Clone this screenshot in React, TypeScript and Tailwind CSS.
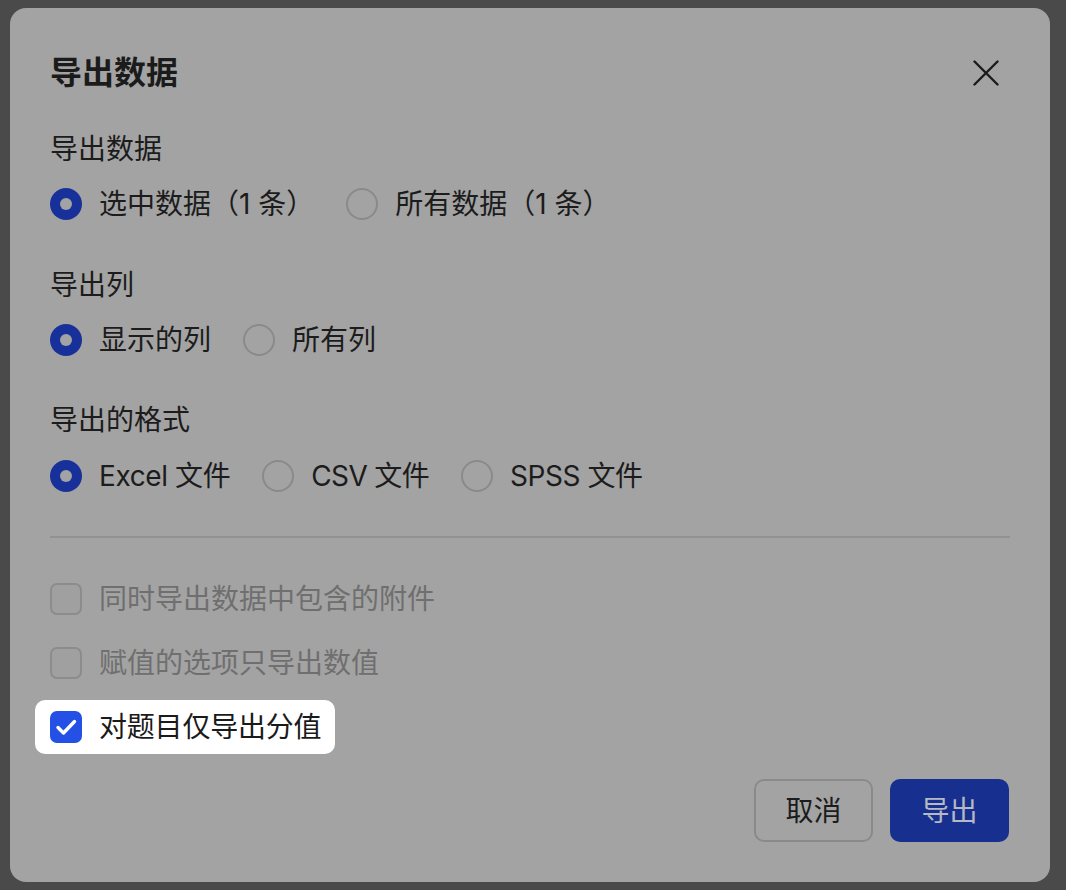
import { useState } from "react";

type Option = { id: string; label: string; tracking?: string };

const dataOptions: Option[] = [
  { id: "selected", label: "选中数据（1 条）" },
  { id: "all", label: "所有数据（1 条）" },
];

const columnOptions: Option[] = [
  { id: "visible", label: "显示的列" },
  { id: "all", label: "所有列" },
];

const formatOptions: Option[] = [
  { id: "excel", label: "Excel 文件", tracking: "tracking-[-0.4px]" },
  { id: "csv", label: "CSV 文件", tracking: "tracking-[-0.65px]" },
  { id: "spss", label: "SPSS 文件", tracking: "tracking-[-0.45px]" },
];

function Radio({ checked }: { checked: boolean }) {
  return checked ? (
    <span className="w-[32px] h-[32px] rounded-full bg-[#18319a] flex items-center justify-center flex-shrink-0">
      <span className="w-[12px] h-[12px] rounded-full bg-[#a3a3a3]" />
    </span>
  ) : (
    <span className="w-[32px] h-[32px] rounded-full border-2 border-[#8a8a8a] flex-shrink-0" />
  );
}

function RadioGroup({
  options,
  value,
  onChange,
}: {
  options: Option[];
  value: string;
  onChange: (v: string) => void;
}) {
  return (
    <div className="h-[40px] flex items-center gap-[32px]">
      {options.map((o) => (
        <button key={o.id} onClick={() => onChange(o.id)} className="flex items-center gap-[17px] text-[28px] leading-[40px] text-[#1c1c1c]">
          <Radio checked={value === o.id} />
          <span className={o.tracking}>{o.label}</span>
        </button>
      ))}
    </div>
  );
}

export default function App() {
  const [data, setData] = useState("selected");
  const [cols, setCols] = useState("visible");
  const [format, setFormat] = useState("excel");
  const [scoreOnly, setScoreOnly] = useState(true);

  return (
    <main className="min-h-[890px] w-full bg-[#4a4a4a] pt-[8px] pl-[10px] [font-family:Inter,'Noto_Sans_CJK_SC',sans-serif]">
      <div className="w-[1040px] h-[874px] rounded-[16px] bg-[#a3a3a3] px-[40px] pt-[45px] flex flex-col">
        {/* Header */}
        <div className="h-[40px] flex items-center justify-between">
          <h2 className="text-[32px] leading-[40px] font-bold text-[#1b1b1b]">导出数据</h2>
          <button className="mr-[11px] mt-[-1px]">
            <svg width="26" height="26" viewBox="0 0 26 26" fill="none" stroke="#1b1b1b" strokeWidth={2.4} strokeLinecap="round">
              <path d="M1.5 1.5L24.5 24.5M24.5 1.5L1.5 24.5" />
            </svg>
          </button>
        </div>

        <p className="mt-[36px] text-[28px] leading-[40px] text-[#1c1c1c]">导出数据</p>
        <div className="mt-[15px]">
          <RadioGroup options={dataOptions} value={data} onChange={setData} />
        </div>

        <p className="mt-[41px] text-[28px] leading-[40px] text-[#1c1c1c]">导出列</p>
        <div className="mt-[15px]">
          <RadioGroup options={columnOptions} value={cols} onChange={setCols} />
        </div>

        <p className="mt-[40px] text-[28px] leading-[40px] text-[#1c1c1c]">导出的格式</p>
        <div className="mt-[16px]">
          <RadioGroup options={formatOptions} value={format} onChange={setFormat} />
        </div>

        <div className="mt-[40px] h-[2px] bg-[#929292]" />

        {/* Checkboxes */}
        <div className="mt-[34px] flex flex-col items-start gap-[10px]">
          <div className="h-[54px] -ml-[15px] pl-[15px] pr-[14px] flex items-center gap-[17px] text-[28px] leading-[40px] text-[#6f6f6f]">
            <span className="w-[32px] h-[32px] rounded-[7px] border-2 border-[#8c8c8c] bg-[#a0a0a0]" />
            同时导出数据中包含的附件
          </div>
          <div className="h-[54px] -ml-[15px] pl-[15px] pr-[14px] flex items-center gap-[17px] text-[28px] leading-[40px] text-[#6f6f6f]">
            <span className="w-[32px] h-[32px] rounded-[7px] border-2 border-[#8c8c8c] bg-[#a0a0a0]" />
            赋值的选项只导出数值
          </div>
          <button
            onClick={() => setScoreOnly(!scoreOnly)}
            className="h-[54px] -ml-[15px] pl-[15px] pr-[14px] flex items-center gap-[17px] rounded-[10px] bg-white text-[28px] leading-[40px] text-[#1a1a1a] tracking-[-0.2px]"
          >
            {scoreOnly ? (
              <span className="w-[32px] h-[32px] rounded-[7px] bg-[#2450e5] flex items-center justify-center">
                <svg width="32" height="32" viewBox="0 0 32 32" fill="none" stroke="white" strokeWidth={3.4} strokeLinecap="round" strokeLinejoin="round">
                  <path d="M8 16.5L13.5 22L24.5 10.5" />
                </svg>
              </span>
            ) : (
              <span className="w-[32px] h-[32px] rounded-[7px] border-2 border-[#c4c4c4]" />
            )}
            对题目仅导出分值
          </button>
        </div>

        {/* Footer */}
        <div className="mt-[25px] flex justify-end gap-[17px] pr-px">
          <button className="w-[119px] h-[63px] rounded-[10px] border-2 border-[#8a8a8a] text-[28px] text-[#1c1c1c]">取消</button>
          <button className="w-[119px] h-[63px] rounded-[10px] bg-[#17308f] text-[28px] text-[#b6b8c2]">导出</button>
        </div>
      </div>
    </main>
  );
}
